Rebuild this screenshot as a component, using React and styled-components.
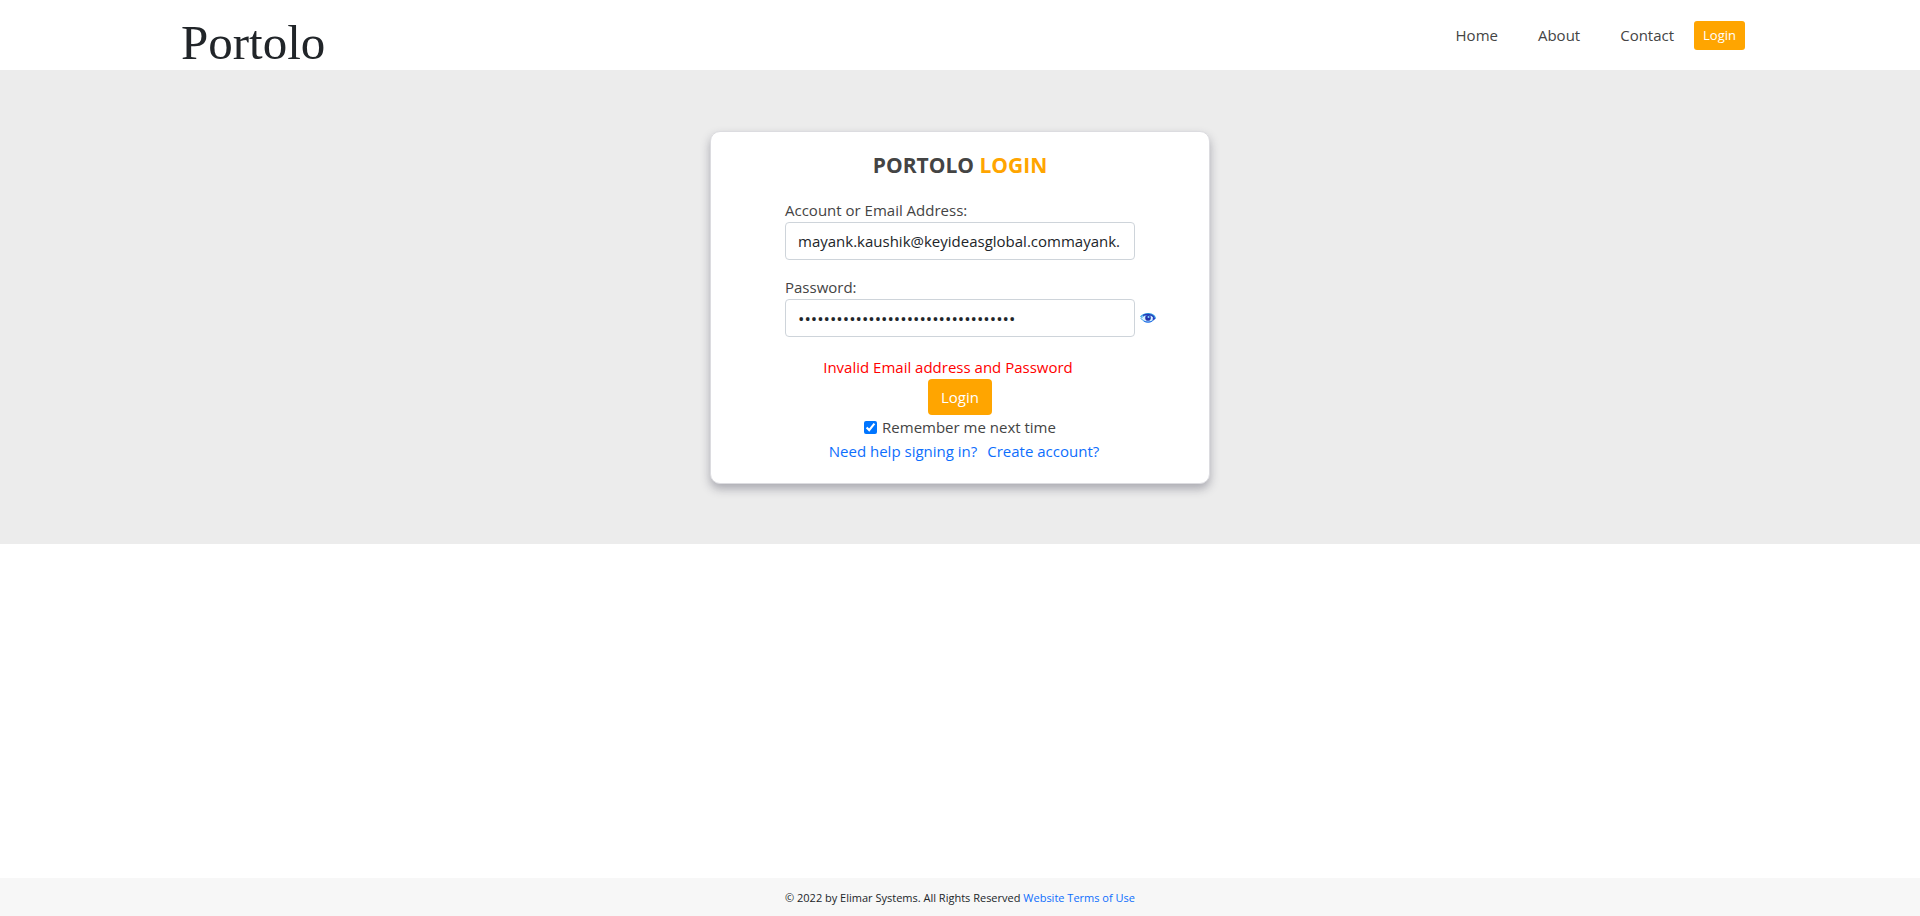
import React, { useState } from "react";
import styled, { createGlobalStyle } from "styled-components";

const GlobalStyle = createGlobalStyle`
  *, *::before, *::after { box-sizing: border-box; }
  body {
    margin: 0;
    background: #fff;
    color: #212529;
    font-family: "Open Sans", "Noto Sans", sans-serif;
    font-size: 15px;
    line-height: 24px;
  }
  input, button { font: inherit; }
`;

const Page = styled.div`
  display: flex;
  flex-direction: column;
  min-height: 100vh;
`;

const Header = styled.header`
  background: #fff;
`;

const HeaderInner = styled.div`
  display: flex;
  align-items: center;
  justify-content: space-between;
  max-width: 1570px;
  height: 70px;
  margin: 0 auto;
  padding-left: 6px;
`;

const Logo = styled.a`
  padding-top: 16px;
  color: #212529;
  font-family: "Liberation Serif", serif;
  font-size: 49px;
  line-height: 54px;
  text-decoration: none;
`;

const Nav = styled.nav`
  display: flex;
  align-items: center;
  gap: 40px;
`;

const NavLink = styled.a`
  color: #444;
  text-decoration: none;
`;

const Button = styled.button`
  padding: ${(p) => (p.$small ? "4px 9px" : "6px 13px")};
  border: 0;
  border-radius: ${(p) => (p.$small ? 3 : 4)}px;
  background: #ffa500;
  color: #fff;
  font-size: ${(p) => (p.$small ? 13 : 15)}px;
  line-height: ${(p) => (p.$small ? 21 : 24)}px;
  cursor: pointer;
`;

const NavButton = styled(Button)`
  margin-left: -20px;
`;

const Hero = styled.main`
  display: flex;
  justify-content: center;
  padding: 61px 16px 60px;
  background: #ececec;
`;

const Card = styled.form`
  width: 500px;
  max-width: 100%;
  padding: 17px 0 20px;
  border: 1px solid #dcdce0;
  border-radius: 10px;
  background: #fff;
  box-shadow: 0 5px 10px rgba(50, 50, 70, 0.35);
  color: #444;
  text-align: center;
`;

const Title = styled.h1`
  margin: 0 0 17px;
  font-size: 21px;
  font-weight: 700;
  line-height: 32px;
`;

const Accent = styled.span`
  color: #ffa500;
`;

const Field = styled.div`
  display: grid;
  grid-template-columns: 1fr 350px 1fr;
  align-items: center;
  margin-bottom: ${(p) => (p.$last ? 18 : 15)}px;
`;

const Label = styled.label`
  grid-column: 2;
  text-align: left;
`;

const Input = styled.input`
  grid-column: 2;
  width: 100%;
  height: 38px;
  padding: 6px 12px;
  border: 1px solid #ced4da;
  border-radius: 4px;
  background: #fff;
  color: #212529;

  &[type="password"] {
    font-size: 17px;
  }
`;

const EyeButton = styled.button`
  display: flex;
  justify-self: start;
  margin-left: 5px;
  padding: 0;
  border: 0;
  background: none;
  cursor: pointer;
`;

const ErrorText = styled.div`
  padding-right: 24px;
  color: #f00;
`;

const Remember = styled.label`
  display: flex;
  align-items: center;
  justify-content: center;
  gap: 5px;
`;

const Checkbox = styled.input`
  width: 13px;
  height: 13px;
  margin: 0;
  accent-color: #0075ff;
`;

const Links = styled.div`
  display: flex;
  justify-content: center;
  gap: 10px;
  padding-left: 8px;
`;

const Link = styled.a`
  color: #0d6efd;
  text-decoration: none;
`;

const Footer = styled.footer`
  margin-top: auto;
  padding: 10px 16px 8px;
  background: #f7f7f7;
  font-size: 11px;
  line-height: 20px;
  text-align: center;
`;

function EyeIcon() {
  return (
    <svg width="16" height="10" viewBox="0 0 16 10" aria-hidden="true">
      <path d="M1 5.500C3 2.500 5.500 2 8 2s5.500 1 7 3.500C13 8 11 9 8 9S3 8 1 5.500Z" fill="#d9f3ff" stroke="#3b9bea" strokeWidth="1" />
      <path d="M0.500 4C3 1 6 0.500 9 0.700c3 .2 5.500 1.800 6.500 4.600" fill="none" stroke="#2fa4e4" strokeWidth="1.200" />
      <path d="M3 2.600C6 .8 11 .8 14 4" fill="none" stroke="#2438b8" strokeWidth="1.200" />
      <path d="M13 3l2.500 2.500L12.500 8Z" fill="#2a40c4" />
      <circle cx="8" cy="4.900" r="2.800" fill="#2434ae" />
      <circle cx="8.500" cy="4" r="1" fill="#7fd4ff" />
      <path d="M4 8.200c2.500 1.300 5.500 1.300 8 0" fill="none" stroke="#2f6fe8" strokeWidth="1" />
    </svg>
  );
}

export default function App() {
  const [email, setEmail] = useState("mayank.kaushik@keyideasglobal.commayank.");
  const [password, setPassword] = useState("x".repeat(34));
  const [visible, setVisible] = useState(false);

  return (
    <>
      <GlobalStyle />
      <Page>
        <Header>
          <HeaderInner>
            <Logo href="#">Portolo</Logo>
            <Nav>
              <NavLink href="#">Home</NavLink>
              <NavLink href="#">About</NavLink>
              <NavLink href="#">Contact</NavLink>
              <NavButton type="button" $small>Login</NavButton>
            </Nav>
          </HeaderInner>
        </Header>
        <Hero>
          <Card onSubmit={(e) => e.preventDefault()}>
            <Title>PORTOLO <Accent>LOGIN</Accent></Title>
            <Field>
              <Label htmlFor="email">Account or Email Address:</Label>
              <Input id="email" type="text" value={email} onChange={(e) => setEmail(e.target.value)} />
            </Field>
            <Field $last>
              <Label htmlFor="password">Password:</Label>
              <Input
                id="password"
                type={visible ? "text" : "password"}
                value={password}
                onChange={(e) => setPassword(e.target.value)}
              />
              <EyeButton type="button" aria-label="Show password" onClick={() => setVisible(!visible)}>
                <EyeIcon />
              </EyeButton>
            </Field>
            <ErrorText role="alert">Invalid Email address and Password</ErrorText>
            <Button type="submit">Login</Button>
            <Remember>
              <Checkbox type="checkbox" defaultChecked />
              Remember me next time
            </Remember>
            <Links>
              <Link href="#">Need help signing in?</Link>
              <Link href="#">Create account?</Link>
            </Links>
          </Card>
        </Hero>
        <Footer>
          © 2022 by Elimar Systems. All Rights Reserved <Link href="#">Website Terms of Use</Link>
        </Footer>
      </Page>
    </>
  );
}
